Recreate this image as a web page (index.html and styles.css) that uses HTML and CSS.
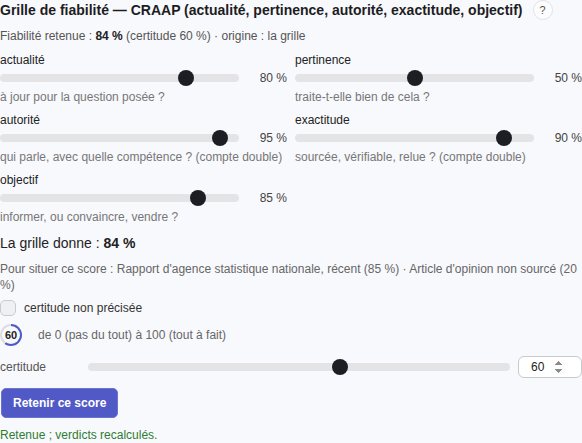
FILE: index.html
```html
<!DOCTYPE html>
<html lang="fr">
<head>
<meta charset="utf-8">
<title>Grille de fiabilité</title>
<link rel="stylesheet" href="styles.css">
</head>
<body>
<main class="page">
  <header class="title-row">
    <h1 class="title">Grille de fiabilité — CRAAP (actualité, pertinence, autorité, exactitude, objectif)</h1>
    <span class="help">?</span>
  </header>
  <p class="summary">Fiabilité retenue : <b>84 %</b> (certitude 60 %) · origine : la grille</p>

  <div class="criteria">
    <div class="criterion">
      <label class="crit-label">actualité</label>
      <div class="slider-row"><input type="range" class="slider" min="0" max="100" value="80"><span class="val">80 %</span></div>
      <p class="hint">à jour pour la question posée ?</p>
    </div>
    <div class="criterion">
      <label class="crit-label">pertinence</label>
      <div class="slider-row"><input type="range" class="slider" min="0" max="100" value="50"><span class="val">50 %</span></div>
      <p class="hint">traite-t-elle bien de cela ?</p>
    </div>
    <div class="criterion">
      <label class="crit-label">autorité</label>
      <div class="slider-row"><input type="range" class="slider" min="0" max="100" value="95"><span class="val">95 %</span></div>
      <p class="hint">qui parle, avec quelle compétence ? (compte double)</p>
    </div>
    <div class="criterion">
      <label class="crit-label">exactitude</label>
      <div class="slider-row"><input type="range" class="slider" min="0" max="100" value="90"><span class="val">90 %</span></div>
      <p class="hint">sourcée, vérifiable, relue ? (compte double)</p>
    </div>
    <div class="criterion">
      <label class="crit-label">objectif</label>
      <div class="slider-row"><input type="range" class="slider" min="0" max="100" value="85"><span class="val">85 %</span></div>
      <p class="hint">informer, ou convaincre, vendre ?</p>
    </div>
  </div>

  <p class="result">La grille donne : <b>84 %</b></p>
  <p class="context">Pour situer ce score : Rapport d'agence statistique nationale, récent (85 %) · Article d'opinion non sourcé (20 %)</p>

  <label class="check-row"><input type="checkbox" class="check"><span>certitude non précisée</span></label>

  <div class="ring-row">
    <div class="ring"><span class="ring-inner">60</span></div>
    <span class="scale">de 0 (pas du tout) à 100 (tout à fait)</span>
  </div>

  <div class="cert-row">
    <label class="cert-label">certitude</label>
    <input type="range" class="slider" min="0" max="100" value="60">
    <input type="number" class="num" min="0" max="100" value="60">
  </div>

  <button class="btn" type="button">Retenir ce score</button>
  <p class="status">Retenue ; verdicts recalculés.</p>
</main>
</body>
</html>
```

FILE: styles.css
```css
html, body {
  margin: 0;
  padding: 0;
  background: #f8f9fc;
}

body {
  font-family: "Liberation Sans", Arial, Helvetica, sans-serif;
  font-size: 12px;
  color: #222;
}

.page {
  display: flex;
  flex-direction: column;
  align-items: flex-start;
  width: 582px;
}

.title-row {
  display: flex;
  align-items: center;
  gap: 10px;
  height: 20px;
}

.title {
  margin: 0;
  font-size: 14px;
  font-weight: bold;
  line-height: 20px;
  color: #1d1d1f;
  white-space: nowrap;
}

.help {
  width: 18px;
  height: 18px;
  border: 1px solid #e2e3e8;
  border-radius: 50%;
  background: #fdfdfe;
  color: #555;
  font-size: 11px;
  line-height: 18px;
  text-align: center;
}

.summary {
  margin: 8px 0 0;
  line-height: 16px;
  color: #555;
}

.summary b {
  color: #222;
}

.criteria {
  margin-top: 8px;
  display: grid;
  grid-template-columns: 287px 287px;
  column-gap: 8px;
  row-gap: 7px;
  width: 582px;
}

.criterion {
  display: flex;
  flex-direction: column;
}

.crit-label {
  line-height: 16px;
  color: #222;
}

.slider-row {
  margin-top: 2px;
  display: flex;
  align-items: center;
  gap: 8px;
  height: 16px;
}

.val {
  width: 40px;
  text-align: right;
  color: #444;
  line-height: 16px;
}

.hint {
  margin: 3px 0 0;
  line-height: 16px;
  color: #777;
}

.slider {
  -webkit-appearance: none;
  appearance: none;
  flex: 1;
  min-width: 0;
  height: 16px;
  margin: 0;
  padding: 0;
  background: transparent;
}

.slider::-webkit-slider-runnable-track {
  height: 8px;
  border-radius: 4px;
  background: #e4e4e7;
}

.slider::-webkit-slider-thumb {
  -webkit-appearance: none;
  appearance: none;
  width: 16px;
  height: 16px;
  margin-top: -4px;
  border-radius: 50%;
  background: #1d1e23;
  border: none;
}

.result {
  margin: 9px 0 0;
  font-size: 14px;
  line-height: 18px;
  color: #222;
}

.context {
  margin: 9px 0 0;
  line-height: 16px;
  color: #666;
}

.check-row {
  margin-top: 7px;
  display: flex;
  align-items: center;
  gap: 8px;
  height: 16px;
  color: #333;
}

.check {
  -webkit-appearance: none;
  appearance: none;
  width: 16px;
  height: 16px;
  margin: 0;
  border: 1px solid #c9cace;
  border-radius: 5px;
  background: #eff0f3;
}

.ring-row {
  margin-top: 8px;
  display: flex;
  align-items: center;
  gap: 16px;
  height: 22px;
}

.ring {
  width: 22px;
  height: 22px;
  border-radius: 50%;
  background: conic-gradient(#4e5ac6 0 60%, #dcdde3 60% 100%);
  display: flex;
  align-items: center;
  justify-content: center;
}

.ring-inner {
  width: 18px;
  height: 18px;
  border-radius: 50%;
  background: #f8f9fc;
  font-size: 11px;
  font-weight: bold;
  line-height: 18px;
  text-align: center;
  color: #222;
}

.scale {
  color: #666;
  line-height: 16px;
}

.cert-row {
  margin-top: 10px;
  display: flex;
  align-items: center;
  gap: 8px;
  width: 582px;
  height: 22px;
}

.cert-label {
  width: 80px;
  color: #555;
}

.num {
  width: 64px;
  height: 22px;
  box-sizing: border-box;
  margin: 0;
  padding: 0 15px 0 12px;
  border: 1px solid #c9cace;
  border-radius: 6px;
  background: #fff;
  font-family: inherit;
  font-size: 12px;
  color: #222;
}

.num::-webkit-inner-spin-button {
  opacity: 1;
  background: #ebebef;
}

.btn {
  margin-top: 10px;
  margin-left: 1px;
  height: 30px;
  padding: 0 11px;
  border: 1px solid #6a72d2;
  border-radius: 5px;
  background: #5159c6;
  color: #fff;
  font-family: inherit;
  font-size: 12px;
  font-weight: bold;
}

.status {
  margin: 9px 0 0;
  line-height: 16px;
  color: #2e7d32;
}
```
